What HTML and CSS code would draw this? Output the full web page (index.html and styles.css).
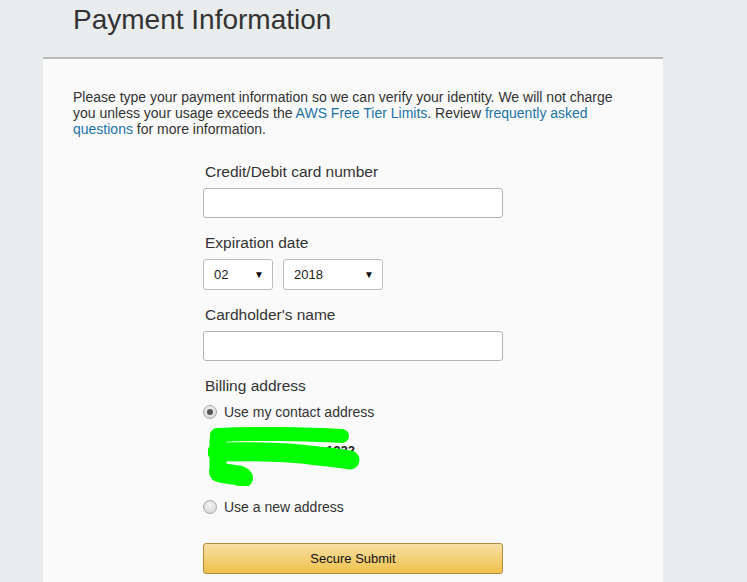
FILE: index.html
```html
<!DOCTYPE html>
<html>
<head>
<meta charset="utf-8">
<link rel="stylesheet" href="styles.css">
</head>
<body>
<div class="page">
  <h1 class="title">Payment Information</h1>
  <div class="card">
    <p class="intro">Please type your payment information so we can verify your identity. We will not charge you unless your usage exceeds the <a href="#">AWS Free Tier Limits</a>. Review <a href="#">frequently asked questions</a> for more information.</p>
    <form class="form">
      <label class="label">Credit/Debit card number</label>
      <input class="input" type="text">
      <label class="label">Expiration date</label>
      <div class="selects">
        <div class="select sel-month"><span>02</span><span class="arrow">&#9660;</span></div>
        <div class="select sel-year"><span>2018</span><span class="arrow">&#9660;</span></div>
      </div>
      <label class="label">Cardholder's name</label>
      <input class="input" type="text">
      <label class="label label-billing">Billing address</label>
      <div class="radio-row"><span class="radio checked"></span><span>Use my contact address</span></div>
      <svg class="scribble" width="160" height="60" viewBox="0 0 160 60">
        <text x="118" y="29" class="hidden-text">1222</text>
        <path d="M10 14 L10 46" stroke="#00ff00" stroke-width="17" stroke-linecap="round" fill="none"/>
        <path d="M9 9 C40 7, 100 8, 134 10" stroke="#00ff00" stroke-width="14" stroke-linecap="round" fill="none"/>
        <path d="M9 26 C50 25, 90 27, 110 30 C125 31, 133 33, 142 34" stroke="#00ff00" stroke-width="19" stroke-linecap="round" fill="none"/>
        <path d="M11 46 C20 49, 32 48, 35 52" stroke="#00ff00" stroke-width="20" stroke-linecap="round" fill="none"/>
      </svg>
      <div class="radio-row radio-new"><span class="radio"></span><span>Use a new address</span></div>
      <button class="submit" type="button">Secure Submit</button>
    </form>
  </div>
</div>
</body>
</html>
```
FILE: styles.css
```css
html, body {
  margin: 0;
  padding: 0;
}
body {
  background: #e9ecec;
  font-family: "Liberation Sans", Arial, sans-serif;
  color: #333;
  overflow: hidden;
}
.page {
  margin-left: 43px;
  width: 620px;
}
.title {
  margin: 0;
  padding: 4px 0 0 30px;
  height: 57px;
  box-sizing: border-box;
  font-size: 28px;
  font-weight: normal;
  line-height: 32px;
  color: #333;
}
.card {
  background: #fafafa;
  border-top: 2px solid #b9bbbb;
  padding: 30px 30px 20px 30px;
  min-height: 540px;
}
.intro {
  margin: 0;
  font-size: 14px;
  line-height: 16px;
  color: #333;
}
.intro a {
  color: #1a73a8;
  text-decoration: none;
}
.form {
  width: 300px;
  margin: 0 auto;
  padding-top: 26px;
  display: flex;
  flex-direction: column;
}
.label {
  display: block;
  font-size: 15.5px;
  line-height: 18px;
  color: #333;
  margin-left: 2px;
  margin-bottom: 7px;
}
.input {
  display: block;
  box-sizing: border-box;
  width: 300px;
  height: 30px;
  margin: 0 0 16px 0;
  border: 1px solid #b4b4b4;
  border-radius: 3px;
  background: #fff;
}
.selects {
  display: flex;
  gap: 10px;
  margin-bottom: 16px;
}
.select {
  box-sizing: border-box;
  height: 31px;
  border: 1px solid #bdbdbd;
  border-radius: 3px;
  background: #fff;
  display: flex;
  align-items: center;
  justify-content: space-between;
  padding: 0 8px 0 10px;
  font-size: 13px;
  color: #222;
}
.sel-month { width: 70px; }
.sel-year { width: 100px; }
.arrow {
  font-size: 10px;
  color: #111;
}
.label-billing {
  margin-bottom: 8px;
}
.radio-row {
  display: flex;
  align-items: center;
  gap: 7px;
  font-size: 14px;
  line-height: 18px;
  color: #333;
}
.radio {
  box-sizing: border-box;
  width: 14px;
  height: 14px;
  border-radius: 50%;
  border: 1px solid #a9a9a9;
  background: radial-gradient(circle at 50% 35%, #f4f4f4, #d2d2d2);
  display: flex;
  align-items: center;
  justify-content: center;
}
.radio.checked::after {
  content: "";
  width: 6px;
  height: 6px;
  border-radius: 50%;
  background: #555;
}
.scribble {
  display: block;
  margin: 5px 0 0 5px;
}
.hidden-text {
  font-family: "Liberation Sans", Arial, sans-serif;
  font-size: 13px;
  font-weight: bold;
  fill: #222;
}
.radio-new {
  margin-top: 12px;
}
.submit {
  margin-top: 27px;
  width: 300px;
  height: 31px;
  border: 1px solid #b08d3a;
  border-radius: 3px;
  background: linear-gradient(#f7dfa5, #f0c14b);
  font-family: "Liberation Sans", Arial, sans-serif;
  font-size: 13px;
  color: #111;
  padding: 0;
}
```
